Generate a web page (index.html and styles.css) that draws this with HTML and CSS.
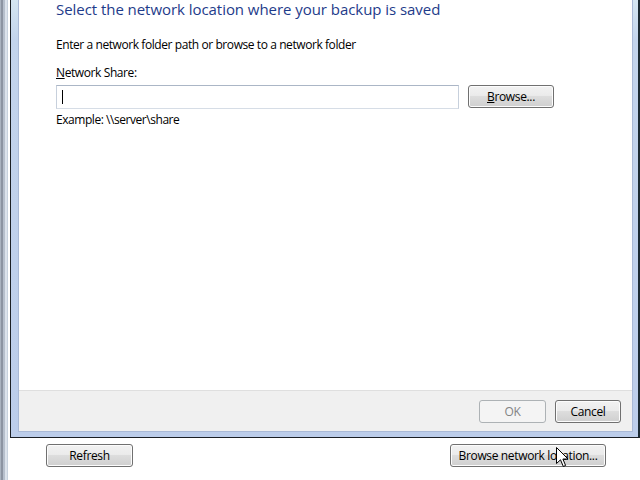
FILE: index.html
```html
<!DOCTYPE html>
<html>
<head>
<meta charset="utf-8">
<link rel="stylesheet" href="styles.css">
</head>
<body>
<div class="screen">
  <div class="bg-edge"></div>
  <div class="main">
    <div class="dialog">
      <div class="content">
        <div class="body">
          <h1 class="title">Select the network location where your backup is saved</h1>
          <p class="intro">Enter a network folder path or browse to a network folder</p>
          <label class="label"><u>N</u>etwork Share:</label>
          <div class="field-row">
            <div class="input"><span class="caret"></span></div>
            <button class="btn browse"><u>B</u>rowse...</button>
          </div>
          <p class="example">Example: \\server\share</p>
        </div>
        <div class="footer">
          <button class="btn ok" disabled>OK</button>
          <button class="btn cancel">Cancel</button>
        </div>
      </div>
    </div>
    <div class="bottom">
      <button class="btn refresh">Refresh</button>
      <button class="btn netloc">Browse network location...</button>
    </div>
  </div>
  <svg class="pointer" width="13" height="21" viewBox="0 0 13 21">
    <path d="M0.5 0.5 L0.5 16.5 L4.5 12.8 L7.3 19.5 L9.6 18.5 L6.9 12 L12 12 Z" fill="#fff" stroke="#000" stroke-width="1"/>
  </svg>
</div>
</body>
</html>
```

FILE: styles.css
```css
* { box-sizing: border-box; }
html, body { margin: 0; padding: 0; background: #fff; }
body { font-family: "Open Sans", "Noto Sans", sans-serif; font-size: 12px; color: #000; }

.screen {
  position: relative;
  width: 640px;
  height: 480px;
  overflow: hidden;
  display: flex;
}

.bg-edge {
  width: 10px;
  flex: none;
  background: linear-gradient(to right, #aab3c0 0, #aab3c0 1px, #8c94a2 1px, #8c94a2 3px, #b6bfcc 3px, #b6bfcc 5px, #dce3ec 5px, #dce3ec 7px, #c8d2de 7px, #c8d2de 8px, #ffffff 8px, #ffffff 10px);
}

.main {
  flex: 1;
  display: flex;
  flex-direction: column;
}

.dialog {
  height: 438px;
  flex: none;
  border-left: 1px solid #1b1f24;
  border-right: 2px solid #1b2a33;
  border-bottom: 1px solid #1b1f24;
  padding: 0 5px 5px 7px;
  background: linear-gradient(to bottom, #d5e6f2 0, #c3d4ec 40px, #bccdea 100%);
  display: flex;
}

.content {
  flex: 1;
  background: #fff;
  display: flex;
  flex-direction: column;
  border-left: 1px solid #a9b9d6;
  border-right: 1px solid #a9b9d6;
  border-bottom: 1px solid #a9b9d6;
}

.body {
  flex: 1;
  padding: 0 0 0 37px;
}

.title {
  margin: -1px 0 0;
  font-size: 15px;
  font-weight: normal;
  line-height: 20px;
  color: #1e3b8a;
  letter-spacing: -0.05px;
}

.intro {
  margin: 18px 0 0;
  line-height: 16px;
  letter-spacing: -0.42px;
}

.label {
  display: block;
  margin-top: 12px;
  line-height: 16px;
  letter-spacing: -0.4px;
}

.field-row {
  display: flex;
  align-items: flex-start;
  margin-top: 4px;
}

.input {
  width: 403px;
  height: 24px;
  border: 1px solid #b4bcc7;
  border-color: #abb6c6 #c7d0dc #d6dde6 #c7d0dc;
  background: #fff;
  position: relative;
  padding: 4px 5px;
}

.caret {
  display: block;
  width: 1px;
  height: 14px;
  background: #000;
}

.btn {
  font-family: inherit;
  font-size: 12px;
  letter-spacing: -0.35px;
  color: #000;
  height: 23px;
  padding: 0;
  border: 1px solid #707070;
  border-radius: 3px;
  box-shadow: inset 0 0 0 1px #fcfcfc;
  background: linear-gradient(to bottom, #f2f2f2 0%, #ebebeb 45%, #dddddd 50%, #cfcfcf 100%);
  line-height: 19px;
}

.browse {
  width: 86px;
  margin-left: 9px;
}

.example {
  margin: 3px 0 0;
  line-height: 16px;
  letter-spacing: -0.45px;
}

.footer {
  height: 41px;
  flex: none;
  background: #f0f0f0;
  border-top: 1px solid #dfdfdf;
  display: flex;
  justify-content: flex-end;
  align-items: flex-start;
  padding: 9px 11px 0 0;
  gap: 9px;
}

.ok {
  width: 67px;
  border-color: #adb2b5;
  background: #f4f4f4;
  box-shadow: none;
  color: #838383;
}
.cancel { width: 66px; }

.bottom {
  flex: 1;
  display: flex;
  justify-content: space-between;
  align-items: flex-start;
  padding: 6px 34px 0 36px;
  background: #fff;
}

.refresh { width: 87px; }
.netloc { width: 156px; }

.pointer {
  position: absolute;
  left: 556px;
  top: 447px;
}
```
